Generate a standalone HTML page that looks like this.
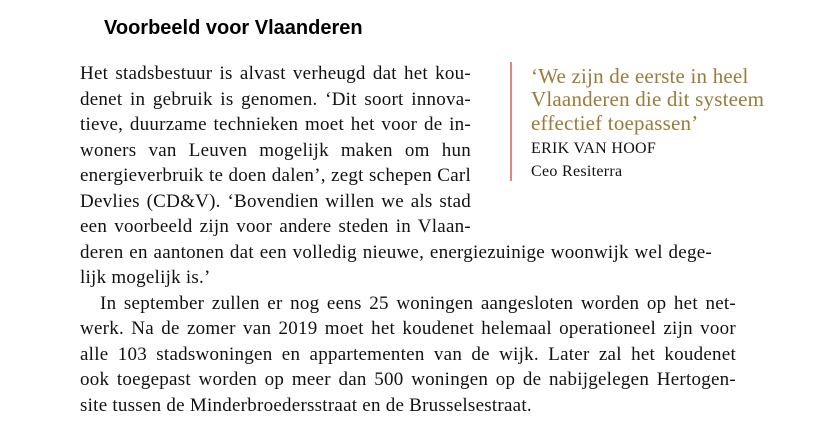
<!DOCTYPE html><html><head><meta charset="utf-8"><style>
body{margin:0;width:820px;height:439px;background:#fff;position:relative;overflow:hidden}
h2{position:absolute;left:104px;top:17px;margin:0;font:bold 20px "Liberation Sans",sans-serif;color:#000}
.l{position:absolute;left:80px;font:19px/24px "Liberation Serif",serif;letter-spacing:0.25px;color:#111;text-align:justify;text-align-last:justify;white-space:nowrap}
.n{text-align-last:left}
.bar{position:absolute;left:510px;top:62px;width:2px;height:119px;background:#d98a80}
.q{position:absolute;left:531px;font:21px/23.3px "Liberation Serif",serif;letter-spacing:0.2px;color:#9a7b39}
.s{position:absolute;left:531px;font:16px "Liberation Serif",serif;letter-spacing:0.3px;color:#111}
</style></head><body>
<h2>Voorbeeld voor Vlaanderen</h2>
<div class="l" style="top:62px;width:391px">Het stadsbestuur is alvast verheugd dat het kou-</div>
<div class="l" style="top:87.5px;width:391px">denet in gebruik is genomen. ‘Dit soort innova-</div>
<div class="l" style="top:113px;width:391px">tieve, duurzame technieken moet het voor de in-</div>
<div class="l" style="top:138.5px;width:391px">woners van Leuven mogelijk maken om hun</div>
<div class="l" style="top:164px;width:391px">energieverbruik te doen dalen’, zegt schepen Carl</div>
<div class="l" style="top:189.5px;width:391px">Devlies (CD&amp;V). ‘Bovendien willen we als stad</div>
<div class="l" style="top:215px;width:391px">een voorbeeld zijn voor andere steden in Vlaan-</div>
<div class="l" style="top:240.5px;width:632px">deren en aantonen dat een volledig nieuwe, energiezuinige woonwijk wel dege-</div>
<div class="l n" style="top:266px">lijk mogelijk is.’</div>
<div class="l" style="top:291.5px;left:100px;width:636px">In september zullen er nog eens 25 woningen aangesloten worden op het net-</div>
<div class="l" style="top:317px;width:656px">werk. Na de zomer van 2019 moet het koudenet helemaal operationeel zijn voor</div>
<div class="l" style="top:342.5px;width:656px">alle 103 stadswoningen en appartementen van de wijk. Later zal het koudenet</div>
<div class="l" style="top:368px;width:656px">ook toegepast worden op meer dan 500 woningen op de nabijgelegen Hertogen-</div>
<div class="l n" style="top:393.5px">site tussen de Minderbroedersstraat en de Brusselsestraat.</div>
<div class="bar"></div>
<div class="q" style="top:65px">‘We zijn de eerste in heel<br>Vlaanderen die dit systeem<br>effectief toepassen’</div>
<div class="s" style="top:140px">ERIK VAN HOOF</div>
<div class="s" style="top:163px">Ceo Resiterra</div>
</body></html>
